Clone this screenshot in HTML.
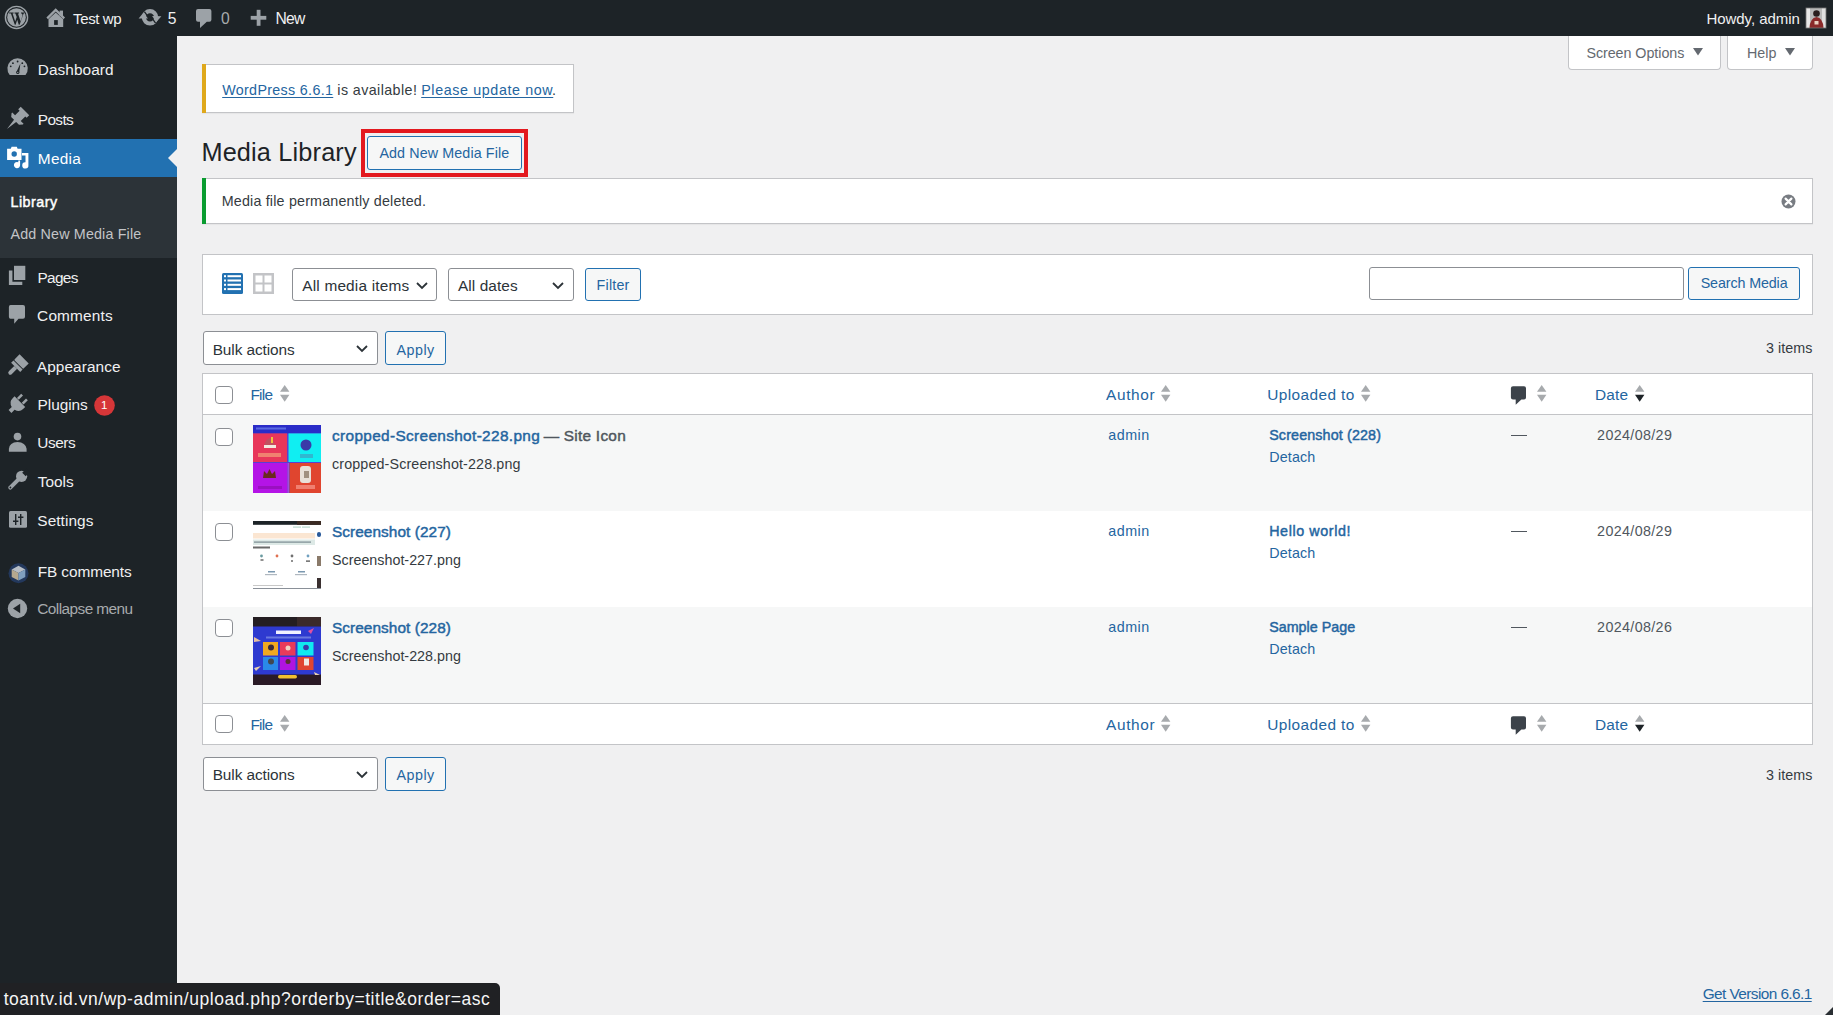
<!DOCTYPE html>
<html><head><meta charset="utf-8"><title>Media Library</title>
<style>
html,body{margin:0;padding:0;width:1833px;height:1015px;overflow:hidden;background:#f0f0f1;font-family:'Liberation Sans',sans-serif;}
.a{position:absolute;box-sizing:border-box;}
.t{position:absolute;white-space:pre;line-height:1;}
svg{position:absolute;overflow:visible;}
</style></head><body>
<div class="a" style="left:0px;top:0px;width:1833px;height:36px;background:#1d2327"></div>
<div class="a" style="left:0px;top:36px;width:177px;height:979px;background:#1d2327"></div>
<div class="a" style="left:0px;top:139px;width:177px;height:38px;background:#2271b1"></div>
<div class="a" style="left:0px;top:177px;width:177px;height:81px;background:#2c3338"></div>
<svg style="left:168px;top:149px" width="9" height="18"><path d="M9 0 L0 9 L9 18 Z" fill="#f0f0f1"/></svg>
<div class="a" style="left:202px;top:64px;width:372px;height:49px;background:#fff;border:1px solid #c3c4c7;box-shadow:0 1px 1px rgba(0,0,0,.04)"></div>
<div class="a" style="left:202px;top:64px;width:4px;height:49px;background:#dfa81b"></div>
<div class="a" style="left:202px;top:178px;width:1611px;height:46px;background:#fff;border:1px solid #c3c4c7;box-shadow:0 1px 1px rgba(0,0,0,.04)"></div>
<div class="a" style="left:202px;top:178px;width:4px;height:46px;background:#0a9c30"></div>
<svg style="left:1781px;top:194px" width="15" height="15" viewBox="0 0 15 15"><circle cx="7.5" cy="7.5" r="7" fill="#787c82"/><path d="M4.6 4.6 L10.4 10.4 M10.4 4.6 L4.6 10.4" stroke="#fff" stroke-width="2.2" stroke-linecap="round"/></svg>
<div class="a" style="left:361px;top:129px;width:167px;height:48px;border:4px solid #e3191f"></div>
<div class="a" style="left:367px;top:136px;width:155px;height:34px;background:#f6f7f7;border:1px solid #2271b1;border-radius:3px"></div>
<div class="a" style="left:1568px;top:30px;width:153px;height:40px;background:#fff;border:1px solid #c3c4c7;border-top:none;border-radius:0 0 4px 4px"></div>
<div class="a" style="left:1727px;top:30px;width:86px;height:40px;background:#fff;border:1px solid #c3c4c7;border-top:none;border-radius:0 0 4px 4px"></div>
<div class="a" style="left:1568px;top:30px;width:260px;height:6px;background:#1d2327"></div>
<svg style="left:1693px;top:48px" width="10" height="8"><path d="M0 0 L10 0 L5 7.5 Z" fill="#646970"/></svg>
<svg style="left:1785px;top:48px" width="10" height="8"><path d="M0 0 L10 0 L5 7.5 Z" fill="#646970"/></svg>
<div class="a" style="left:202px;top:254px;width:1611px;height:61px;background:#fff;border:1px solid #c3c4c7"></div>
<svg style="left:222px;top:273px" width="21" height="21" viewBox="0 0 21 21"><rect x="0" y="0" width="21" height="21" rx="1.5" fill="#2271b1"/><rect x="2" y="2.2" width="2" height="2" fill="#fff"/><rect x="5.5" y="2.2" width="13.5" height="2" fill="#fff"/><rect x="2" y="6.5" width="2" height="2" fill="#fff"/><rect x="5.5" y="6.5" width="13.5" height="2" fill="#fff"/><rect x="2" y="10.8" width="2" height="2" fill="#fff"/><rect x="5.5" y="10.8" width="13.5" height="2" fill="#fff"/><rect x="2" y="15.099999999999998" width="2" height="2" fill="#fff"/><rect x="5.5" y="15.099999999999998" width="13.5" height="2" fill="#fff"/></svg>
<svg style="left:253px;top:273px" width="21" height="21" viewBox="0 0 21 21"><rect x="0" y="0" width="21" height="21" fill="#c3c4c7"/><rect x="2.5" y="2.5" width="7" height="7" fill="#fff"/><rect x="11.5" y="2.5" width="7" height="7" fill="#fff"/><rect x="2.5" y="11.5" width="7" height="7" fill="#fff"/><rect x="11.5" y="11.5" width="7" height="7" fill="#fff"/></svg>
<div class="a" style="left:292px;top:267.5px;width:145px;height:33px;background:#fff;border:1px solid #8c8f94;border-radius:3px"></div>
<svg style="left:416px;top:281.5px" width="12" height="7" viewBox="0 0 12 7"><path d="M1 1 L6 6 L11 1" fill="none" stroke="#2c3338" stroke-width="1.8"/></svg>
<div class="a" style="left:448px;top:267.5px;width:126px;height:33px;background:#fff;border:1px solid #8c8f94;border-radius:3px"></div>
<svg style="left:552px;top:281.5px" width="12" height="7" viewBox="0 0 12 7"><path d="M1 1 L6 6 L11 1" fill="none" stroke="#2c3338" stroke-width="1.8"/></svg>
<div class="a" style="left:585px;top:267.5px;width:56px;height:33px;background:#f6f7f7;border:1px solid #2271b1;border-radius:3px"></div>
<div class="a" style="left:1369px;top:266.5px;width:315px;height:33px;background:#fff;border:1px solid #8c8f94;border-radius:3px"></div>
<div class="a" style="left:1688px;top:266.5px;width:112px;height:33px;background:#f6f7f7;border:1px solid #2271b1;border-radius:3px"></div>
<div class="a" style="left:203px;top:331px;width:175px;height:34px;background:#fff;border:1px solid #8c8f94;border-radius:3px"></div>
<svg style="left:356px;top:345px" width="12" height="7" viewBox="0 0 12 7"><path d="M1 1 L6 6 L11 1" fill="none" stroke="#2c3338" stroke-width="1.8"/></svg>
<div class="a" style="left:385px;top:331px;width:61px;height:34px;background:#f6f7f7;border:1px solid #2271b1;border-radius:3px"></div>
<div class="a" style="left:203px;top:757px;width:175px;height:34px;background:#fff;border:1px solid #8c8f94;border-radius:3px"></div>
<svg style="left:356px;top:771px" width="12" height="7" viewBox="0 0 12 7"><path d="M1 1 L6 6 L11 1" fill="none" stroke="#2c3338" stroke-width="1.8"/></svg>
<div class="a" style="left:385px;top:757px;width:61px;height:34px;background:#f6f7f7;border:1px solid #2271b1;border-radius:3px"></div>
<div class="a" style="left:202px;top:373px;width:1611px;height:372px;background:#fff;border:1px solid #c3c4c7"></div>
<div class="a" style="left:203px;top:414px;width:1609px;height:1px;background:#c3c4c7"></div>
<div class="a" style="left:203px;top:415px;width:1609px;height:96px;background:#f6f7f7"></div>
<div class="a" style="left:203px;top:607px;width:1609px;height:96px;background:#f6f7f7"></div>
<div class="a" style="left:203px;top:703px;width:1609px;height:1px;background:#c3c4c7"></div>
<div class="a" style="left:215px;top:386px;width:18px;height:18px;background:#fff;border:1px solid #8c8f94;border-radius:4px"></div>
<div class="a" style="left:215px;top:428px;width:18px;height:18px;background:#fff;border:1px solid #8c8f94;border-radius:4px"></div>
<div class="a" style="left:215px;top:523px;width:18px;height:18px;background:#fff;border:1px solid #8c8f94;border-radius:4px"></div>
<div class="a" style="left:215px;top:619px;width:18px;height:18px;background:#fff;border:1px solid #8c8f94;border-radius:4px"></div>
<div class="a" style="left:215px;top:715px;width:18px;height:18px;background:#fff;border:1px solid #8c8f94;border-radius:4px"></div>
<svg style="left:280.2px;top:385.3px" width="10" height="17" viewBox="0 0 10 17"><path d="M4.7 0 L9.4 6.8 L0 6.8 Z" fill="#a7aaad"/><path d="M0 9.8 L9.4 9.8 L4.7 16.8 Z" fill="#a7aaad"/></svg>
<svg style="left:1161.3px;top:385.3px" width="10" height="17" viewBox="0 0 10 17"><path d="M4.7 0 L9.4 6.8 L0 6.8 Z" fill="#a7aaad"/><path d="M0 9.8 L9.4 9.8 L4.7 16.8 Z" fill="#a7aaad"/></svg>
<svg style="left:1361px;top:385.3px" width="10" height="17" viewBox="0 0 10 17"><path d="M4.7 0 L9.4 6.8 L0 6.8 Z" fill="#a7aaad"/><path d="M0 9.8 L9.4 9.8 L4.7 16.8 Z" fill="#a7aaad"/></svg>
<svg style="left:1537px;top:385.3px" width="10" height="17" viewBox="0 0 10 17"><path d="M4.7 0 L9.4 6.8 L0 6.8 Z" fill="#a7aaad"/><path d="M0 9.8 L9.4 9.8 L4.7 16.8 Z" fill="#a7aaad"/></svg>
<svg style="left:1634.8px;top:385.3px" width="10" height="17" viewBox="0 0 10 17"><path d="M4.7 0 L9.4 6.8 L0 6.8 Z" fill="#a7aaad"/><path d="M0 9.8 L9.4 9.8 L4.7 16.8 Z" fill="#1d2327"/></svg>
<svg style="left:1510px;top:385.8px" width="17" height="20" viewBox="0 0 17 20"><path d="M3 0.3 H14 Q16 0.3 16 2.3 V11.5 Q16 13.5 14 13.5 H11.4 L5.7 18.8 V13.5 H3 Q0.9 13.5 0.9 11.5 V2.3 Q0.9 0.3 3 0.3 Z" fill="#3c434a"/></svg>
<svg style="left:280.2px;top:715.2px" width="10" height="17" viewBox="0 0 10 17"><path d="M4.7 0 L9.4 6.8 L0 6.8 Z" fill="#a7aaad"/><path d="M0 9.8 L9.4 9.8 L4.7 16.8 Z" fill="#a7aaad"/></svg>
<svg style="left:1161.3px;top:715.2px" width="10" height="17" viewBox="0 0 10 17"><path d="M4.7 0 L9.4 6.8 L0 6.8 Z" fill="#a7aaad"/><path d="M0 9.8 L9.4 9.8 L4.7 16.8 Z" fill="#a7aaad"/></svg>
<svg style="left:1361px;top:715.2px" width="10" height="17" viewBox="0 0 10 17"><path d="M4.7 0 L9.4 6.8 L0 6.8 Z" fill="#a7aaad"/><path d="M0 9.8 L9.4 9.8 L4.7 16.8 Z" fill="#a7aaad"/></svg>
<svg style="left:1537px;top:715.2px" width="10" height="17" viewBox="0 0 10 17"><path d="M4.7 0 L9.4 6.8 L0 6.8 Z" fill="#a7aaad"/><path d="M0 9.8 L9.4 9.8 L4.7 16.8 Z" fill="#a7aaad"/></svg>
<svg style="left:1634.8px;top:715.2px" width="10" height="17" viewBox="0 0 10 17"><path d="M4.7 0 L9.4 6.8 L0 6.8 Z" fill="#a7aaad"/><path d="M0 9.8 L9.4 9.8 L4.7 16.8 Z" fill="#1d2327"/></svg>
<svg style="left:1510px;top:715.7px" width="17" height="20" viewBox="0 0 17 20"><path d="M3 0.3 H14 Q16 0.3 16 2.3 V11.5 Q16 13.5 14 13.5 H11.4 L5.7 18.8 V13.5 H3 Q0.9 13.5 0.9 11.5 V2.3 Q0.9 0.3 3 0.3 Z" fill="#3c434a"/></svg>
<svg style="left:253px;top:425px" width="68" height="68" viewBox="0 0 68 68"><rect width="68" height="68" fill="#5a3fd0"/><rect width="68" height="8.4" fill="#2a2cc8"/><rect x="3" y="2.5" width="30" height="2" fill="#5a6ae0"/><rect x="0" y="8.4" width="34" height="28.6" fill="#e8365a"/><rect x="35.5" y="8.4" width="32.5" height="28.6" fill="#10eef2"/><rect x="0" y="38" width="34.5" height="30" fill="#b414e6"/><rect x="34.5" y="38" width="1.5" height="30" fill="#a050d8"/><rect x="36.5" y="38" width="31.5" height="30" fill="#e0452f"/><path d="M11 22 Q12 14 17 13 Q21 14 22 22 Z" fill="#c05060"/><rect x="11" y="20" width="12" height="3" fill="#f4e8e0"/><rect x="18" y="12" width="2" height="6" fill="#f0c040"/><rect x="5" y="28" width="23" height="4" fill="#f08070"/><circle cx="53" cy="20" r="5.5" fill="#3a3aa8"/><rect x="47" y="29" width="13" height="4" fill="#30b8d0"/><path d="M10 53 L11 46 L14 49 L16.5 44 L19 49 L22 46 L23 53 Z" fill="#6a2a20"/><rect x="5" y="61" width="24" height="3" fill="#9a10c0"/><rect x="47" y="41" width="11" height="17" rx="3" fill="#e8e0d8"/><rect x="51" y="46" width="5" height="7" fill="#a09080"/><rect x="43" y="60" width="19" height="4" fill="#f08070"/></svg>
<svg style="left:253px;top:521px" width="68" height="68" viewBox="0 0 68 68"><rect width="68" height="68" fill="#ffffff"/><rect width="68" height="3.8" fill="#1d2327"/><rect x="44" y="0" width="24" height="3.8" fill="#3a2a22"/><rect x="40" y="5.5" width="8" height="1.2" fill="#b8d8cc"/><rect x="49" y="5.5" width="8" height="1.2" fill="#b8d8cc"/><rect x="0" y="12" width="62" height="5.5" fill="#fbe6d2"/><rect x="0" y="18.5" width="62" height="5.5" fill="#dde9e6"/><rect x="1" y="20.5" width="57" height="1.2" fill="#7a8a90"/><rect x="0" y="25.5" width="17" height="2" fill="#6a6a6a"/><circle cx="8.5" cy="35" r="1.4" fill="#6a9aa0"/><circle cx="24" cy="35" r="1.4" fill="#e07050"/><circle cx="39" cy="35" r="1.4" fill="#707070"/><circle cx="55" cy="35" r="1.4" fill="#70a0c0"/><rect x="7.5" y="38.5" width="3" height="1" fill="#222"/><rect x="38" y="39.5" width="2" height="1" fill="#222"/><rect x="53" y="39.5" width="4" height="1.2" fill="#444"/><rect x="15" y="50" width="7" height="1.5" fill="#7a98b0"/><rect x="12" y="53" width="12" height="1.2" fill="#b0b8c0"/><rect x="45" y="50" width="7" height="1.5" fill="#7a98b0"/><rect x="42" y="53" width="12" height="1.2" fill="#b0b8c0"/><rect x="0" y="64" width="30" height="1" fill="#c8c8c8"/><rect x="64" y="11" width="4" height="5" rx="2" fill="#2a5a9a"/><rect x="64" y="35" width="4" height="10" fill="#8a7a6a"/><rect x="64" y="57" width="4" height="10" fill="#3a3030"/><rect x="0" y="67" width="68" height="1" fill="#8a9098"/></svg>
<svg style="left:253px;top:616.5px" width="68" height="68" viewBox="0 0 68 68"><rect width="68" height="68" fill="#2a1a26"/><rect width="68" height="9.5" fill="#241e22"/><rect x="44" y="0" width="24" height="9.5" fill="#3a2a2a"/><rect x="0" y="9.5" width="68" height="48" fill="#2e3ad0"/><rect x="23" y="13.5" width="25" height="3.5" fill="#f0f0ff"/><rect x="13" y="19.5" width="45" height="2" fill="#6a78e0"/><rect x="10" y="25" width="15" height="13.5" fill="#f0a820"/><rect x="27" y="25" width="15.5" height="13.5" fill="#e83a5a"/><rect x="44.5" y="25" width="16" height="13.5" fill="#10eaf0"/><rect x="10" y="40" width="15" height="13" fill="#2a8ae8"/><rect x="27" y="40" width="15.5" height="13" fill="#b014e0"/><rect x="44.5" y="40" width="16" height="13" fill="#e04530"/><circle cx="18" cy="30.5" r="3" fill="#3a2a3a"/><circle cx="35" cy="31" r="2.5" fill="#f0d0c0"/><circle cx="53" cy="30.5" r="2.8" fill="#3a3aa8"/><circle cx="18" cy="44.5" r="3" fill="#404850"/><circle cx="35" cy="44.5" r="2.5" fill="#5a3030"/><rect x="51" y="41.5" width="5" height="7" fill="#f0e8e0"/><path d="M55 14 L61 11 L58 17 Z" fill="#e050a0"/><path d="M1 20 L8 24 L1 25 Z" fill="#e8c0a0"/><path d="M1 51 L8 49 L3 54 Z" fill="#e8d0b0"/><path d="M61 55 L67 58 L62 58 Z" fill="#e8d0b0"/><rect x="25" y="58" width="19" height="3.5" rx="1.7" fill="#f0c030"/></svg>
<div class="a" style="left:1510.5px;top:435px;width:16px;height:1.2px;background:#50575e"></div>
<div class="a" style="left:1510.5px;top:531px;width:16px;height:1.2px;background:#50575e"></div>
<div class="a" style="left:1510.5px;top:627px;width:16px;height:1.2px;background:#50575e"></div>
<div class="a" style="left:0px;top:982.5px;width:500px;height:33px;background:#202124;border-top-right-radius:5px"></div>
<svg style="left:1825px;top:1007px" width="8" height="8"><path d="M8 0 L8 8 L0 8 Z" fill="#2a2f33"/></svg>
<svg style="left:4px;top:5px" width="25" height="25" viewBox="0 0 25 25"><circle cx="12.5" cy="12.45" r="11.1" fill="none" stroke="#9ca2a7" stroke-width="1.4"/><circle cx="12.5" cy="12.45" r="9.3" fill="#9ca2a7"/><path d="M5.2 7.6 H9.6 V8.5 H8.6 L11.2 16.4 L12.7 12 L11.4 8.5 H10.5 V7.6 H15 V8.5 H14 L16.6 16.4 L18.4 10.8 Q18.8 9.2 17.7 8.5 H17 V7.6 H20.3 V8.5 H19.6 L15.6 19.8 H14.8 L13.2 14.8 L11.6 19.8 H10.8 L6.9 8.5 H5.2 Z" fill="#1d2327"/></svg>
<svg style="left:46px;top:8px" width="20" height="20" viewBox="0 0 20 20"><path d="M1.2 10.4 L9.7 1.9 L18.2 10.4" fill="none" stroke="#9ca2a7" stroke-width="2.3"/><rect x="13.6" y="2.6" width="3.4" height="5.5" fill="#9ca2a7"/><path d="M2.5 11.3 L9.7 4.6 L17.2 11.3 V19.1 H2.5 Z" fill="#9ca2a7"/><rect x="8.1" y="12.1" width="3.7" height="4.8" fill="#1d2327"/></svg>
<svg style="left:136px;top:6px" width="28" height="24" viewBox="0 0 28 24"><circle cx="14" cy="11.35" r="6.2" fill="none" stroke="#9ca2a7" stroke-width="4.1"/><path d="M8.4 5.6 L12.9 11.9" stroke="#1d2327" stroke-width="1.3"/><path d="M19.6 17.1 L15.1 10.8" stroke="#1d2327" stroke-width="1.3"/><path d="M2.6 12.4 L7.6 6.6 L11.9 12.6 Z" fill="#9ca2a7"/><path d="M25.4 10.3 L20.4 16.1 L16.1 10.1 Z" fill="#9ca2a7"/></svg>
<svg style="left:195px;top:8px" width="18" height="21" viewBox="0 0 18 21"><path d="M3 1 H14.4 Q16.4 1 16.4 3 V11.7 Q16.4 13.7 14.4 13.7 H11.8 L5 20 V13.7 H3 Q1 13.7 1 11.7 V3 Q1 1 3 1 Z" fill="#9ca2a7"/></svg>
<svg style="left:250px;top:9px" width="17" height="17" viewBox="0 0 17 17"><rect x="6.7" y="0.8" width="3.8" height="16" fill="#9ca2a7"/><rect x="0.7" y="6.9" width="15.6" height="3.8" fill="#9ca2a7"/></svg>
<svg style="left:1806px;top:8px" width="20" height="20" viewBox="0 0 20 20"><rect width="20" height="20" fill="#b9b9b9"/><rect x="0" y="0" width="4" height="20" fill="#e8e8e8"/><rect x="16" y="0" width="4" height="20" fill="#e0e0e0"/><circle cx="10.5" cy="5.5" r="3.3" fill="#2a1e1e"/><path d="M3.5 20 Q4 10 10.5 9 Q17 10 17.5 20 Z" fill="#8a2a2a"/><rect x="8.5" y="13" width="4" height="3.5" fill="#e8d0c0"/><rect x="0" y="0" width="20" height="20" fill="none" stroke="#777" stroke-width="0.8"/></svg>
<svg style="left:7px;top:58px" width="21" height="18" viewBox="0 0 21 18"><path d="M2.7 17 A10.2 10.2 0 1 1 18.5 17 Z" fill="#9ca2a7"/><circle cx="3.74" cy="8.32" r="0.9" fill="#1d2327"/><circle cx="5.93" cy="5.18" r="0.9" fill="#1d2327"/><circle cx="10.60" cy="3.50" r="0.9" fill="#1d2327"/><circle cx="15.27" cy="5.18" r="0.9" fill="#1d2327"/><circle cx="17.46" cy="8.32" r="0.9" fill="#1d2327"/><path d="M9.3 14.3 L13.4 5.6 L12.2 14.5 Z" fill="#1d2327"/><circle cx="10.8" cy="14.4" r="1.6" fill="#1d2327"/><circle cx="10.8" cy="14.4" r="0.6" fill="#9ca2a7"/></svg>
<svg style="left:5px;top:108px" width="23" height="23" viewBox="0 0 23 23"><g transform="rotate(45 11.5 11.5)"><path d="M5.5 -0.5 H17.5 V3.1 H15.5 V9.5 H19.5 V10.5 L17 13.5 H13 L11.5 25 L10 13.5 H6 L3.5 10.5 V9.5 H7.5 V3.1 H5.5 Z" fill="#9ca2a7"/></g></svg>
<svg style="left:0px;top:140px" width="36" height="36" viewBox="0 0 36 36"><path d="M7.1 8.7 H10.8 L11.6 6.7 H16.8 L17.6 8.7 H21.5 V19.9 H7.1 Z" fill="#ffffff"/><circle cx="14.2" cy="14" r="2.7" fill="#2271b1"/><path d="M22 12.9 H28.4 V25 A3.1 3.1 0 1 1 25.5 22.3 V15.6 H22 Z" fill="#ffffff"/><path d="M18.3 20.6 H20.1 V25 A3.1 3.1 0 1 1 18.3 22.3 Z" fill="#ffffff"/></svg>
<svg style="left:8px;top:265px" width="19" height="21" viewBox="0 0 19 21"><path d="M0.9 5.5 H4.4 V16.7 H14.3 V20.1 H0.9 Z" fill="#9ca2a7"/><rect x="6" y="0.8" width="11.3" height="14.2" fill="#9ca2a7"/></svg>
<svg style="left:8px;top:304px" width="19" height="21" viewBox="0 0 19 21"><path d="M2.5 1 H15 Q17 1 17 3 V12.8 Q17 14.8 15 14.8 H10.5 L6.2 19.7 V14.8 H2.5 Q0.9 14.8 0.9 12.8 V3 Q0.9 1 2.5 1 Z" fill="#9ca2a7"/></svg>
<svg style="left:3px;top:355px" width="26" height="24" viewBox="0 0 26 24"><g transform="rotate(45 13 12) translate(13 12) scale(0.92) translate(-13 -12)"><path d="M6 -0.5 H20 V7 Q20 8 19 8 H7 Q6 8 6 7 Z" fill="#9ca2a7"/><rect x="6" y="8.9" width="14" height="3.6" fill="#9ca2a7"/><path d="M10.8 12.5 H15.2 V20.5 Q15.2 23 13 23 Q10.8 23 10.8 20.5 Z" fill="#9ca2a7"/></g></svg>
<svg style="left:4.5px;top:395px" width="22" height="21" viewBox="0 0 22 21"><g transform="rotate(45 11 10.5)"><rect x="6.3" y="-1.5" width="2.6" height="6" fill="#9ca2a7"/><rect x="13.1" y="-1.5" width="2.6" height="6" fill="#9ca2a7"/><path d="M3.5 5 H18.5 V8 Q18.5 13 13 14.5 V19 H9 V14.5 Q3.5 13 3.5 8 Z" fill="#9ca2a7"/></g></svg>
<svg style="left:8px;top:432px" width="20" height="21" viewBox="0 0 20 21"><circle cx="9.5" cy="4.6" r="3.8" fill="#9ca2a7"/><path d="M0.9 19.8 V16.8 Q1.4 10.5 9.5 10 Q17.6 10.5 18.6 16.8 V19.8 Z" fill="#9ca2a7"/></svg>
<svg style="left:7px;top:470px" width="21" height="21" viewBox="0 0 21 21"><circle cx="14.6" cy="6.3" r="5.6" fill="#9ca2a7"/><path d="M12.5 8.4 L3.3 17.6" stroke="#9ca2a7" stroke-width="4" stroke-linecap="round"/><path d="M15.2 2.8 L19.5 -1.5 L23 2 L18.7 6.3 Z" fill="#1d2327"/><circle cx="3.4" cy="17.5" r="0.9" fill="#1d2327"/></svg>
<svg style="left:9px;top:511px" width="19" height="18" viewBox="0 0 19 18"><rect x="0" y="0" width="18" height="16.8" rx="1.5" fill="#9ca2a7"/><rect x="6" y="3" width="1.4" height="11" fill="#1d2327"/><rect x="4" y="9.5" width="5.4" height="1.5" fill="#1d2327"/><rect x="11" y="3" width="1.4" height="11" fill="#1d2327"/><rect x="9" y="5.5" width="5.4" height="1.5" fill="#1d2327"/></svg>
<svg style="left:8px;top:562px" width="22" height="22" viewBox="0 0 22 22"><circle cx="10.5" cy="11.2" r="10" fill="#23385c"/><path d="M10.5 3.8 L17.3 7.4 L10.5 11 L3.7 7.4 Z" fill="#b8bec6"/><path d="M3.7 7.4 L10.5 11 V18.6 L3.7 15 Z" fill="#b5a88f"/><path d="M17.3 7.4 L10.5 11 V18.6 L17.3 15 Z" fill="#7f9fbf"/></svg>
<svg style="left:7px;top:598px" width="22" height="22" viewBox="0 0 22 22"><circle cx="10.5" cy="10.5" r="9.7" fill="#9ca2a7"/><path d="M6 10.5 L13.2 5.8 V15.2 Z" fill="#1d2327"/></svg>
<svg style="left:94px;top:395px" width="22" height="22" viewBox="0 0 22 22"><circle cx="10.5" cy="10.5" r="10.3" fill="#d63638"/></svg>
<div class="t" style="left:73.1px;top:11.10px;font-size:15.0px;color:#f0f0f1;font-weight:400;letter-spacing:-0.393px;">Test wp</div>
<div class="t" style="left:167.7px;top:11.31px;font-size:15.7px;color:#f0f0f1;font-weight:400;letter-spacing:0.000px;">5</div>
<div class="t" style="left:221.1px;top:11.31px;font-size:15.7px;color:#a7aaad;font-weight:400;letter-spacing:0.000px;">0</div>
<div class="t" style="left:275.4px;top:11.31px;font-size:15.7px;color:#f0f0f1;font-weight:400;letter-spacing:-0.724px;">New</div>
<div class="t" style="left:1706.4px;top:11.30px;font-size:15.0px;color:#f0f0f1;font-weight:400;letter-spacing:-0.040px;">Howdy, admin</div>
<div class="t" style="left:37.8px;top:61.96px;font-size:15.4px;color:#f0f0f1;font-weight:400;letter-spacing:0.066px;">Dashboard</div>
<div class="t" style="left:37.8px;top:111.66px;font-size:15.4px;color:#f0f0f1;font-weight:400;letter-spacing:-0.644px;">Posts</div>
<div class="t" style="left:37.8px;top:150.96px;font-size:15.4px;color:#ffffff;font-weight:400;letter-spacing:0.276px;">Media</div>
<div class="t" style="left:10.5px;top:194.80px;font-size:14.3px;color:#ffffff;font-weight:400;-webkit-text-stroke:0.45px #ffffff;letter-spacing:0.492px;">Library</div>
<div class="t" style="left:10.5px;top:226.80px;font-size:14.3px;color:#c3c4c7;font-weight:400;letter-spacing:0.166px;">Add New Media File</div>
<div class="t" style="left:37.5px;top:269.86px;font-size:15.4px;color:#f0f0f1;font-weight:400;letter-spacing:-0.704px;">Pages</div>
<div class="t" style="left:37.1px;top:307.96px;font-size:15.4px;color:#f0f0f1;font-weight:400;letter-spacing:0.174px;">Comments</div>
<div class="t" style="left:36.8px;top:358.86px;font-size:15.4px;color:#f0f0f1;font-weight:400;letter-spacing:0.090px;">Appearance</div>
<div class="t" style="left:37.5px;top:396.96px;font-size:15.4px;color:#f0f0f1;font-weight:400;letter-spacing:-0.027px;">Plugins</div>
<div class="t" style="left:37.3px;top:435.46px;font-size:15.4px;color:#f0f0f1;font-weight:400;letter-spacing:-0.470px;">Users</div>
<div class="t" style="left:37.7px;top:473.86px;font-size:15.4px;color:#f0f0f1;font-weight:400;letter-spacing:-0.003px;">Tools</div>
<div class="t" style="left:37.3px;top:512.66px;font-size:15.4px;color:#f0f0f1;font-weight:400;letter-spacing:0.071px;">Settings</div>
<div class="t" style="left:37.7px;top:563.96px;font-size:15.4px;color:#f0f0f1;font-weight:400;letter-spacing:-0.091px;">FB comments</div>
<div class="t" style="left:37.3px;top:601.46px;font-size:15.4px;color:#a7aaad;font-weight:400;letter-spacing:-0.571px;">Collapse menu</div>
<div class="t" style="left:100.9px;top:400.27px;font-size:11.5px;color:#ffffff;font-weight:400;letter-spacing:0.000px;">1</div>
<div class="t" style="left:222.2px;top:82.70px;font-size:14.3px;color:#2465a0;font-weight:400;letter-spacing:0.324px;text-decoration:underline;text-underline-offset:2px;">WordPress 6.6.1</div>
<div class="t" style="left:337.3px;top:82.70px;font-size:14.3px;color:#353b41;font-weight:400;letter-spacing:0.405px;">is available!</div>
<div class="t" style="left:421.2px;top:82.70px;font-size:14.3px;color:#2465a0;font-weight:400;letter-spacing:0.615px;text-decoration:underline;text-underline-offset:2px;">Please update now</div>
<div class="t" style="left:552.0px;top:82.70px;font-size:14.3px;color:#353b41;font-weight:400;letter-spacing:0.000px;">.</div>
<div class="t" style="left:201.4px;top:139.98px;font-size:25.3px;color:#1d2327;font-weight:400;letter-spacing:0.163px;">Media Library</div>
<div class="t" style="left:379.4px;top:145.60px;font-size:14.3px;color:#2465a0;font-weight:400;letter-spacing:0.113px;">Add New Media File</div>
<div class="t" style="left:221.7px;top:194.20px;font-size:14.3px;color:#353b41;font-weight:400;letter-spacing:0.186px;">Media file permanently deleted.</div>
<div class="t" style="left:1586.4px;top:45.90px;font-size:14.3px;color:#646970;font-weight:400;letter-spacing:-0.045px;">Screen Options</div>
<div class="t" style="left:1746.9px;top:45.90px;font-size:14.3px;color:#646970;font-weight:400;letter-spacing:0.084px;">Help</div>
<div class="t" style="left:302.3px;top:277.86px;font-size:15.4px;color:#2c3338;font-weight:400;letter-spacing:0.176px;">All media items</div>
<div class="t" style="left:457.9px;top:277.86px;font-size:15.4px;color:#2c3338;font-weight:400;letter-spacing:0.099px;">All dates</div>
<div class="t" style="left:596.6px;top:278.00px;font-size:14.3px;color:#2465a0;font-weight:400;letter-spacing:0.195px;">Filter</div>
<div class="t" style="left:1700.7px;top:276.00px;font-size:14.3px;color:#2465a0;font-weight:400;letter-spacing:-0.115px;">Search Media</div>
<div class="t" style="left:212.7px;top:342.46px;font-size:15.4px;color:#2c3338;font-weight:400;letter-spacing:-0.096px;">Bulk actions</div>
<div class="t" style="left:396.4px;top:343.40px;font-size:14.3px;color:#2465a0;font-weight:400;letter-spacing:0.523px;">Apply</div>
<div class="t" style="left:1765.9px;top:340.70px;font-size:14.3px;color:#353b41;font-weight:400;letter-spacing:0.077px;">3 items</div>
<div class="t" style="left:212.7px;top:767.36px;font-size:15.4px;color:#2c3338;font-weight:400;letter-spacing:-0.096px;">Bulk actions</div>
<div class="t" style="left:396.4px;top:768.30px;font-size:14.3px;color:#2465a0;font-weight:400;letter-spacing:0.523px;">Apply</div>
<div class="t" style="left:1765.9px;top:767.70px;font-size:14.3px;color:#353b41;font-weight:400;letter-spacing:0.077px;">3 items</div>
<div class="t" style="left:250.4px;top:387.26px;font-size:15.4px;color:#2465a0;font-weight:400;letter-spacing:-0.696px;">File</div>
<div class="t" style="left:1106.1px;top:387.26px;font-size:15.4px;color:#2465a0;font-weight:400;letter-spacing:0.613px;">Author</div>
<div class="t" style="left:1267.2px;top:387.26px;font-size:15.4px;color:#2465a0;font-weight:400;letter-spacing:0.411px;">Uploaded to</div>
<div class="t" style="left:1595.0px;top:387.26px;font-size:15.4px;color:#2465a0;font-weight:400;letter-spacing:0.169px;">Date</div>
<div class="t" style="left:250.4px;top:717.16px;font-size:15.4px;color:#2465a0;font-weight:400;letter-spacing:-0.696px;">File</div>
<div class="t" style="left:1106.1px;top:717.16px;font-size:15.4px;color:#2465a0;font-weight:400;letter-spacing:0.613px;">Author</div>
<div class="t" style="left:1267.2px;top:717.16px;font-size:15.4px;color:#2465a0;font-weight:400;letter-spacing:0.411px;">Uploaded to</div>
<div class="t" style="left:1595.0px;top:717.16px;font-size:15.4px;color:#2465a0;font-weight:400;letter-spacing:0.169px;">Date</div>
<div class="t" style="left:332.0px;top:427.56px;font-size:15.4px;color:#2465a0;font-weight:400;-webkit-text-stroke:0.45px #2465a0;letter-spacing:0.335px;">cropped-Screenshot-228.png</div>
<div class="t" style="left:543.7px;top:427.56px;font-size:15.4px;color:#50575e;font-weight:400;-webkit-text-stroke:0.45px #50575e;letter-spacing:0.246px;">— Site Icon</div>
<div class="t" style="left:332.0px;top:456.50px;font-size:14.3px;color:#353b41;font-weight:400;letter-spacing:0.130px;">cropped-Screenshot-228.png</div>
<div class="t" style="left:1108.2px;top:427.70px;font-size:14.3px;color:#2465a0;font-weight:400;letter-spacing:0.526px;">admin</div>
<div class="t" style="left:1269.2px;top:427.70px;font-size:14.3px;color:#2465a0;font-weight:400;-webkit-text-stroke:0.45px #2465a0;letter-spacing:0.139px;">Screenshot (228)</div>
<div class="t" style="left:1269.2px;top:450.30px;font-size:14.3px;color:#2465a0;font-weight:400;letter-spacing:0.149px;">Detach</div>
<div class="t" style="left:1597.1px;top:427.70px;font-size:14.3px;color:#50575e;font-weight:400;letter-spacing:0.355px;">2024/08/29</div>
<div class="t" style="left:332.0px;top:523.56px;font-size:15.4px;color:#2465a0;font-weight:400;-webkit-text-stroke:0.45px #2465a0;letter-spacing:0.057px;">Screenshot (227)</div>
<div class="t" style="left:332.0px;top:552.50px;font-size:14.3px;color:#353b41;font-weight:400;letter-spacing:0.005px;">Screenshot-227.png</div>
<div class="t" style="left:1108.2px;top:523.70px;font-size:14.3px;color:#2465a0;font-weight:400;letter-spacing:0.526px;">admin</div>
<div class="t" style="left:1269.2px;top:523.70px;font-size:14.3px;color:#2465a0;font-weight:400;-webkit-text-stroke:0.45px #2465a0;letter-spacing:0.605px;">Hello world!</div>
<div class="t" style="left:1269.2px;top:546.30px;font-size:14.3px;color:#2465a0;font-weight:400;letter-spacing:0.149px;">Detach</div>
<div class="t" style="left:1597.1px;top:523.70px;font-size:14.3px;color:#50575e;font-weight:400;letter-spacing:0.355px;">2024/08/29</div>
<div class="t" style="left:332.0px;top:619.56px;font-size:15.4px;color:#2465a0;font-weight:400;-webkit-text-stroke:0.45px #2465a0;letter-spacing:0.057px;">Screenshot (228)</div>
<div class="t" style="left:332.0px;top:648.50px;font-size:14.3px;color:#353b41;font-weight:400;letter-spacing:0.005px;">Screenshot-228.png</div>
<div class="t" style="left:1108.2px;top:619.70px;font-size:14.3px;color:#2465a0;font-weight:400;letter-spacing:0.526px;">admin</div>
<div class="t" style="left:1269.2px;top:619.70px;font-size:14.3px;color:#2465a0;font-weight:400;-webkit-text-stroke:0.45px #2465a0;letter-spacing:0.011px;">Sample Page</div>
<div class="t" style="left:1269.2px;top:642.30px;font-size:14.3px;color:#2465a0;font-weight:400;letter-spacing:0.149px;">Detach</div>
<div class="t" style="left:1597.1px;top:619.70px;font-size:14.3px;color:#50575e;font-weight:400;letter-spacing:0.355px;">2024/08/26</div>
<div class="t" style="left:1702.7px;top:985.56px;font-size:15.4px;color:#2465a0;font-weight:400;letter-spacing:-0.582px;text-decoration:underline;text-underline-offset:2px;text-underline-offset:1.5px;">Get Version 6.6.1</div>
<div class="t" style="left:3.7px;top:990.69px;font-size:17.5px;color:#f6f6f6;font-weight:400;letter-spacing:0.532px;">toantv.id.vn/wp-admin/upload.php?orderby=title&amp;order=asc</div></body></html>
